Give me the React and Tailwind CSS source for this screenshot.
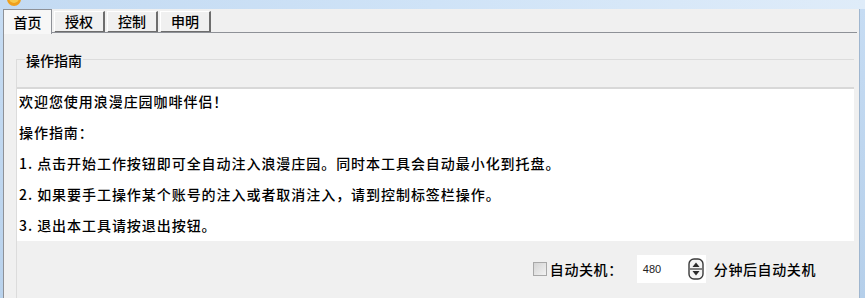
import React from 'react';

const font = { fontFamily: '"SimSun", "Noto Sans CJK SC", sans-serif' };

function Tab({ label, active }) {
  if (active) {
    return (
      <div className="w-[49px] h-[25px] mt-0 bg-[#f7f7f7] border-l border-t border-r border-[#8e9197] flex items-center justify-center text-[14px] text-black relative z-10">
        {label}
      </div>
    );
  }
  return (
    <div className="w-[51px] h-[22px] mt-[2px] ml-[2px] bg-[#f0f0f0] border-l border-t border-white border-r-2 border-r-[#6d6d6d] border-b-2 border-b-[#6d6d6d] flex items-center justify-center text-[14px] text-black">
      {label}
    </div>
  );
}

function SpinIcon() {
  return (
    <svg width="16" height="22" viewBox="0 0 16 22">
      <rect x="1" y="1" width="14" height="20" rx="5" fill="#f4f4f4" stroke="#3a3a3a" strokeWidth="1.4" />
      <line x1="2" y1="11" x2="14" y2="11" stroke="#3a3a3a" strokeWidth="1.2" />
      <path d="M4.5 9 L8 4.5 L11.5 9 Z" fill="#2a2a2a" />
      <path d="M4.5 13 L8 17.5 L11.5 13 Z" fill="#2a2a2a" />
    </svg>
  );
}

export default function App() {
  const lines = [
    '欢迎您使用浪漫庄园咖啡伴侣！',
    '操作指南：',
    '1. 点击开始工作按钮即可全自动注入浪漫庄园。同时本工具会自动最小化到托盘。',
    '2. 如果要手工操作某个账号的注入或者取消注入，请到控制标签栏操作。',
    '3. 退出本工具请按退出按钮。',
  ];

  return (
    <div className="w-[865px] h-[298px] overflow-hidden flex flex-col bg-[#f0f0f0] font-medium" style={font}>
      {/* title strip */}
      <div className="h-[9px] flex bg-gradient-to-r from-[#c3daf2] via-[#cfe3f7] to-[#dfecf9] overflow-hidden">
        <svg width="22" height="9" viewBox="0 0 22 9" className="ml-[3px]">
          <circle cx="11" cy="-1" r="7" fill="#f0a01c" />
          <circle cx="11" cy="-2" r="5" fill="#f7c94a" />
        </svg>
      </div>

      <div className="flex flex-1">
        <div className="w-[3px] bg-gradient-to-b from-[#c6dcf3] to-[#b9d2ec]" />

        <div className="flex-1 flex flex-col">
          {/* tabs */}
          <div className="h-[24px] flex items-start">
            <Tab label="首页" active />
            <Tab label="授权" />
            <Tab label="控制" />
            <Tab label="申明" />
          </div>

          {/* tab panel */}
          <div className="flex-1 border-l border-t border-[#8e9197] -mt-px pl-[12px] pr-[3px] flex flex-col">
            <div className="mt-[26px] flex-1 border-l border-t border-[#dcdcdc] flex flex-col">
              <div className="h-[29px] border-b-2 border-[#d8d8d8] relative">
                <span className="absolute left-[8px] -top-[9px] px-[1px] bg-[#f0f0f0] text-[14px] leading-[18px] text-black">
                  操作指南
                </span>
              </div>
              <div className="bg-white flex flex-col gap-[7px] pl-[2px] pb-[4px] text-[14px] tracking-[0.95px] text-black">
                {lines.map((l) => (
                  <div key={l} className="leading-[24px] whitespace-nowrap">
                    {l}
                  </div>
                ))}
              </div>
              <div className="flex-1 flex items-start justify-end pt-[14px] pr-[38px]">
                <div className="flex items-center h-[28px]">
                  <div className="w-[14px] h-[14px] border border-[#a8a8a8] bg-gradient-to-br from-[#d4d4d4] to-[#f2f2f2]" />
                  <span className="ml-[3px] text-[14px] tracking-[0.6px]">自动关机：</span>
                  <div className="ml-[14px] w-[69px] h-[28px] bg-white flex items-center justify-between pl-[6px] pr-[2px]">
                    <span className="text-[11px] text-[#222]" style={{ fontFamily: '"Liberation Sans", Arial, sans-serif' }}>480</span>
                    <SpinIcon />
                  </div>
                  <span className="ml-[8px] text-[14px] tracking-[0.6px]">分钟后自动关机</span>
                </div>
              </div>
            </div>
          </div>
        </div>

        <div className="w-[8px] flex">
          <div className="w-[2px] bg-[#f0f0f0]" />
          <div className="flex-1 bg-gradient-to-b from-[#c6dcf3] to-[#b5cfea] border-l border-[#9fb6cf]" />
        </div>
      </div>
    </div>
  );
}
